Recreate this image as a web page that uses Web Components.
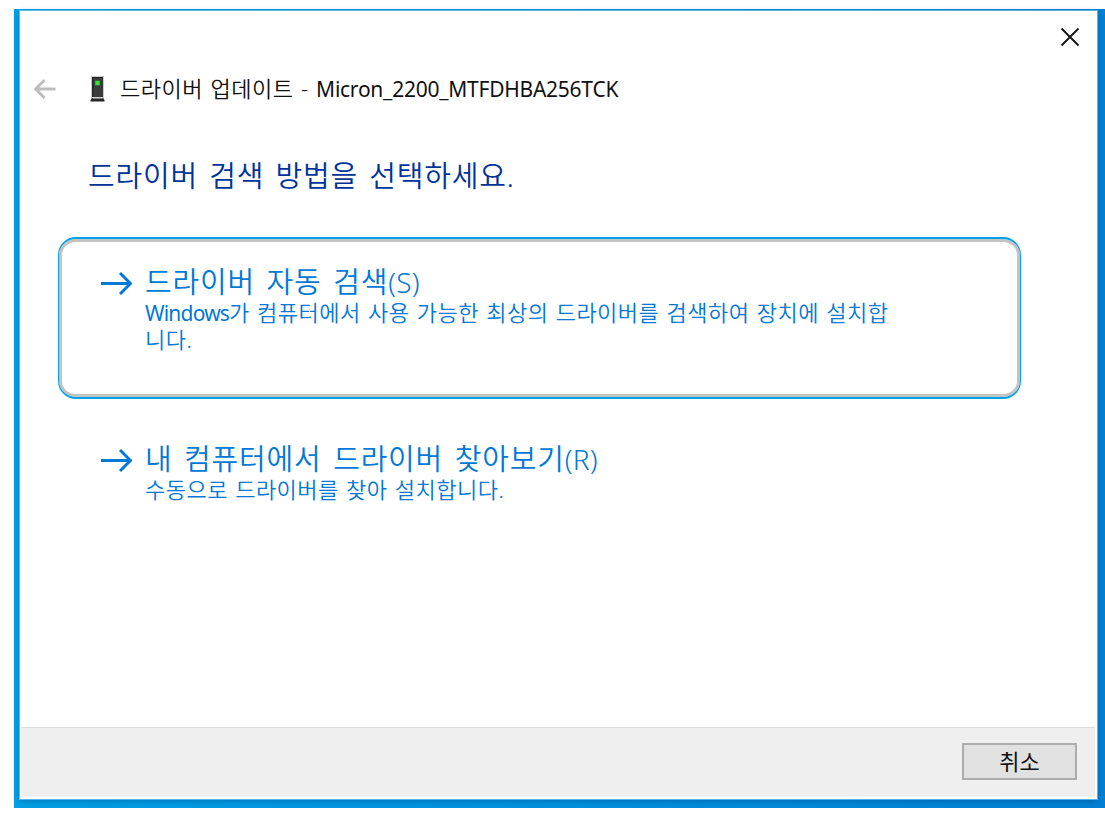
<!DOCTYPE html>
<html lang="ko">
<head>
<meta charset="utf-8">
<title>드라이버 업데이트</title>
<style>
    html, body {
        margin: 0;
        height: 100%;
        background: #fff;
        overflow: hidden;
    }

    body {
        font-family: "Noto Sans", "Noto Sans CJK KR", sans-serif;
        color: #1a1a1a;
    }

    .key {
        font-size: 28px;
        letter-spacing: .3px;
    }
</style>
</head>
<body>
<app-desktop>
    <wizard-window>
        <wizard-title slot="title">드라이버 업데이트 - <span>Micron_2200_MTFDHBA256TCK</span></wizard-title>
        <wizard-heading>드라이버 검색 방법을 선택하세요.</wizard-heading>
        <command-link focused>
            <span slot="label">드라이버 자동 검색<span class="key">(S)</span></span>
            <span class="latin">Windows</span>가 컴퓨터에서 사용 가능한 최상의 드라이버를 검색하여 장치에 설치합<br>니다.
        </command-link>
        <command-link>
            <span slot="label">내 컴퓨터에서 드라이버 찾아보기<span class="key">(R)</span></span>
            수동으로 드라이버를 찾아 설치합니다.
        </command-link>
        <push-button slot="footer">취소</push-button>
    </wizard-window>
</app-desktop>

<script>
class Desktop extends HTMLElement {
    constructor() {
        super();
        this.attachShadow({mode : "open"});
    }

    static get styles() {
        return `
            :host {
                display: flex;
                box-sizing: border-box;
                width: 1091px;
                height: 799px;
                margin: 9px 0 0 14px;
                padding: 2px 8px 9px 6px;
                background: linear-gradient(90deg, #00a1e6, #008fdd 60%, #0080d4);
            }
        `;
    }

    connectedCallback() {
        this.shadowRoot.innerHTML = `
            <style>${Desktop.styles}</style>
            <slot></slot>
        `;
    }
}

class WizardWindow extends HTMLElement {
    constructor() {
        super();
        this.attachShadow({mode : "open"});
    }

    static get styles() {
        return `
            :host {
                display: flex;
                flex-direction: column;
                flex: 1;
                box-sizing: border-box;
                padding: 0 2px 2px 1px;
                background: #fff;
                box-shadow: 0 0 0 1px rgba(130, 205, 245, .7), 0 2px 7px rgba(0, 50, 110, .4);
            }

            .caption {
                display: flex;
                justify-content: flex-end;
                height: 56px;
                padding: 16px 15px 0 0;
                box-sizing: border-box;
            }

            .caption svg {
                display: block;
            }

            main {
                flex: 1;
            }

            footer {
                display: flex;
                align-items: flex-start;
                justify-content: flex-end;
                box-sizing: border-box;
                height: 70px;
                padding: 15px 18px 0 0;
                border-top: 1px solid #dcdcdc;
                background: #efefef;
            }
        `;
    }

    connectedCallback() {
        this.shadowRoot.innerHTML = `
            <style>${WizardWindow.styles}</style>
            <div class="caption">
                <svg width="20" height="20" viewBox="0 0 20 20" fill="none" stroke="#111" stroke-width="1.8">
                    <path d="M1.5 1.5 18.5 18.5M18.5 1.5 1.5 18.5"/>
                </svg>
            </div>
            <slot name="title"></slot>
            <main><slot></slot></main>
            <footer><slot name="footer"></slot></footer>
        `;
    }
}

class WizardTitle extends HTMLElement {
    constructor() {
        super();
        this.attachShadow({mode : "open"});
    }

    static get styles() {
        return `
            :host {
                display: flex;
                align-items: center;
                height: 44px;
                padding-left: 13px;
                font-size: 22px;
                line-height: 43px;
                font-weight: 350;
                white-space: nowrap;
                color: #111;
            }

            .back {
                margin-right: 34px;
            }

            .drive {
                margin-right: 15px;
            }

            .text {
                height: 44px;
                letter-spacing: .5px;
                word-spacing: 1.3px;
            }

            ::slotted(span) {
                font-size: 21px;
                font-weight: 400;
                letter-spacing: -.25px;
            }
        `;
    }

    connectedCallback() {
        this.shadowRoot.innerHTML = `
            <style>${WizardTitle.styles}</style>
            <svg class="back" width="22" height="20" viewBox="0 0 22 20" fill="none" stroke="#bdbdbd" stroke-width="2.8">
                <path d="M2 10H21.5M10.5 1 1.8 10 10.5 19"/>
            </svg>
            <svg class="drive" width="15" height="26" viewBox="0 0 15 26">
                <path fill="#c9ced0" d="M1 0h13v23H1z"/>
                <path fill="#3b3b3b" d="M2 1h11v20H2z"/>
                <path fill="#222" d="M2 1h1.3v20H2zM2 1h11v1H2z"/>
                <path fill="#1f9a1f" d="M5 4.500h5v5H5z"/>
                <path fill="#2fe82f" d="M5.500 5h4v4h-4z"/>
                <path fill="#262626" d="M2 22h11l1.500 2v1.500H.5V24z"/>
                <path fill="#9a9a9a" d="M2.500 22h10v.8h-10z"/>
            </svg>
            <div class="text"><slot></slot></div>
        `;
    }
}

class WizardHeading extends HTMLElement {
    constructor() {
        super();
        this.attachShadow({mode : "open"});
    }

    static get styles() {
        return `
            :host {
                display: block;
                padding: 43px 0 0 67px;
                font-size: 29px;
                line-height: 44px;
                font-weight: 350;
                letter-spacing: .8px;
                word-spacing: 3px;
                white-space: nowrap;
                color: #003399;
            }
        `;
    }

    connectedCallback() {
        this.shadowRoot.innerHTML = `
            <style>${WizardHeading.styles}</style>
            <slot></slot>
        `;
    }
}

class CommandLink extends HTMLElement {
    constructor() {
        super();
        this.attachShadow({mode : "open"});
    }

    static get styles() {
        return `
            :host {
                display: flex;
                box-sizing: border-box;
                width: 963px;
                margin: 15px 0 0 37px;
                padding: 26px 0 0 42px;
                color: #0078d7;
                font-weight: 350;
                white-space: nowrap;
            }

            :host([focused]) {
                height: 162px;
                margin-top: 39px;
                border: solid #00a2e8;
                border-width: 2px 1px;
                border-radius: 18px;
                padding: 24px 0 0 41px;
                box-shadow: inset 0 0 0 3px #c3c3c3;
            }

            svg {
                flex: none;
                margin: 8px 13px 0 0;
            }

            .label {
                height: 36px;
                font-size: 29px;
                line-height: 38px;
                letter-spacing: .8px;
                word-spacing: 3.3px;
            }

            .note {
                font-size: 22px;
                line-height: 26px;
                letter-spacing: .48px;
                word-spacing: 1.1px;
            }

            ::slotted(.latin) {
                font-size: 21px;
                font-weight: 400;
                letter-spacing: -.8px;
            }
        `;
    }

    connectedCallback() {
        this.shadowRoot.innerHTML = `
            <style>${CommandLink.styles}</style>
            <svg width="32" height="24" viewBox="0 0 32 24" fill="none" stroke="currentColor" stroke-width="2.9">
                <path d="M1 12.500H30.500M20 2 30.500 12.500 20 23"/>
            </svg>
            <div>
                <div class="label"><slot name="label"></slot></div>
                <div class="note"><slot></slot></div>
            </div>
        `;
    }
}

class PushButton extends HTMLElement {
    constructor() {
        super();
        this.attachShadow({mode : "open"});
    }

    static get styles() {
        return `
            :host {
                display: flex;
                align-items: center;
                justify-content: center;
                box-sizing: border-box;
                width: 115px;
                height: 37px;
                border: 2px solid #adadad;
                background: #e1e1e1;
                font-size: 22px;
                line-height: 33px;
                color: #111;
            }
        `;
    }

    connectedCallback() {
        this.shadowRoot.innerHTML = `
            <style>${PushButton.styles}</style>
            <slot></slot>
        `;
    }
}

customElements.define("app-desktop", Desktop);
customElements.define("wizard-window", WizardWindow);
customElements.define("wizard-title", WizardTitle);
customElements.define("wizard-heading", WizardHeading);
customElements.define("command-link", CommandLink);
customElements.define("push-button", PushButton);
</script>
</body>
</html>
